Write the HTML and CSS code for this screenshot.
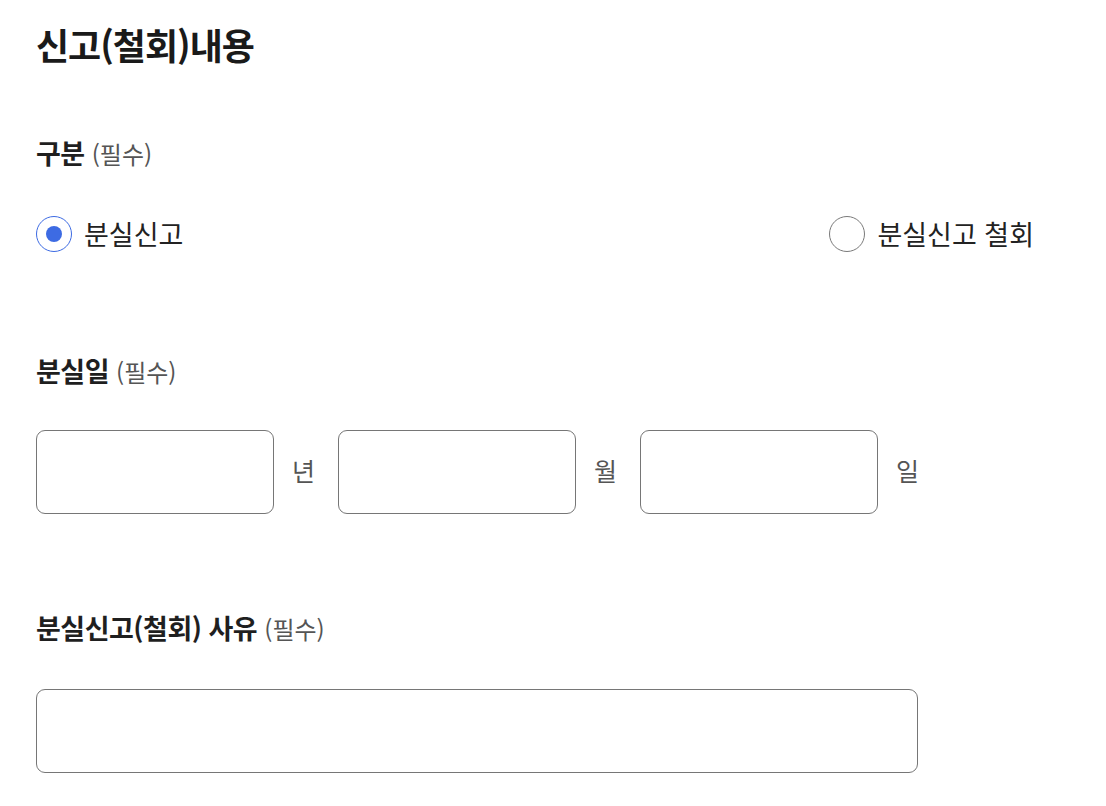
FILE: index.html
```html
<!DOCTYPE html>
<html lang="ko">
<head>
<meta charset="utf-8">
<title>신고(철회)내용</title>
<link rel="stylesheet" href="styles.css">
</head>
<body>
<main class="page">
  <h1 class="title">신고(철회)내용</h1>

  <section class="field field-type">
    <div class="label">구분 <span class="req">(필수)</span></div>
    <div class="radios">
      <label class="radio">
        <span class="radio-mark checked"></span>
        <span class="radio-text">분실신고</span>
      </label>
      <label class="radio">
        <span class="radio-mark"></span>
        <span class="radio-text">분실신고 철회</span>
      </label>
    </div>
  </section>

  <section class="field field-date">
    <div class="label">분실일 <span class="req">(필수)</span></div>
    <div class="date-row">
      <span class="box date-box"></span><span class="unit">년</span>
      <span class="box date-box"></span><span class="unit">월</span>
      <span class="box date-box"></span><span class="unit">일</span>
    </div>
  </section>

  <section class="field field-reason">
    <div class="label">분실신고(철회) 사유 <span class="req">(필수)</span></div>
    <span class="box reason-box"></span>
  </section>
</main>
</body>
</html>
```

FILE: styles.css
```css
* { box-sizing: border-box; }
html, body { margin: 0; padding: 0; background: #fff; }
body {
  font-family: "Noto Sans CJK KR", "Noto Sans", sans-serif;
  color: #1f1f1f;
}
.page {
  padding: 22px 36px 0 36px;
}
.title {
  margin: 0;
  font-size: 36px;
  line-height: 44px;
  font-weight: 700;
  letter-spacing: -1px;
  color: #1a1a1a;
}
.field-type { margin-top: 71px; }
.field-date { margin-top: 103px; }
.field-reason { margin-top: 98px; }

.label {
  height: 32px;
  font-size: 27px;
  line-height: 32px;
  font-weight: 700;
  letter-spacing: -0.5px;
  color: #1f1f1f;
}
.req {
  font-size: 24px;
  line-height: 24px;
  font-weight: 400;
  color: #555;
  letter-spacing: 0;
}
.radios {
  margin-top: 47px;
  display: flex;
  justify-content: space-between;
  width: 998px;
}
.radio {
  display: flex;
  align-items: center;
  gap: 12px;
  height: 36px;
}
.radio-mark {
  width: 36px;
  height: 36px;
  border-radius: 50%;
  border: 1px solid #7a7a7a;
  display: flex;
  align-items: center;
  justify-content: center;
}
.radio-mark.checked { border-color: #3d6be3; }
.radio-mark.checked::after {
  content: "";
  width: 16px;
  height: 16px;
  border-radius: 50%;
  background: #3d6be3;
}
.radio-text {
  font-size: 27px;
  line-height: 36px;
  color: #222;
}
.date-row {
  margin-top: 43px;
  display: flex;
  align-items: center;
}
.box {
  display: block;
  height: 84px;
  border: 1px solid #767676;
  border-radius: 9px;
  background: #fff;
}
.date-box { width: 238px; }
.unit {
  width: 22px;
  margin: 0 24px 0 18px;
  padding-bottom: 4px;
  line-height: 30px;
  text-align: center;
  font-size: 25px;
  color: #555;
}
.reason-box {
  margin-top: 45px;
  width: 882px;
}
```
